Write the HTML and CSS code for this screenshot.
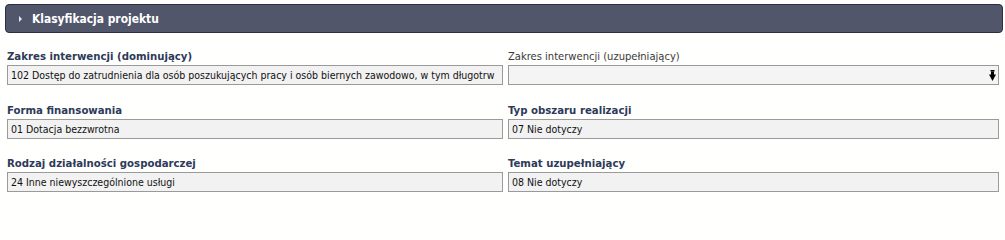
FILE: index.html
```html
<!DOCTYPE html>
<html lang="pl">
<head>
<meta charset="utf-8">
<link rel="stylesheet" href="styles.css">
</head>
<body>
<div class="panel">
  <div class="header">
    <span class="caret"></span>
    <span class="title">Klasyfikacja projektu</span>
  </div>
  <div class="fields">
    <div class="field">
      <div class="label">Zakres interwencji (dominujący)</div>
      <div class="input">102 Dostęp do zatrudnienia dla osób poszukujących pracy i osób biernych zawodowo, w tym długotrw</div>
    </div>
    <div class="field">
      <div class="label plain">Zakres interwencji (uzupełniający)</div>
      <div class="input select">
        <svg class="arrow" width="7" height="11" viewBox="0 0 7 11"><rect x="1.5" y="0" width="4" height="1.5" fill="#000"/><rect x="2" y="1.5" width="3" height="3.5" fill="#000"/><polygon points="0,4.5 7,4.5 3.5,11" fill="#000"/></svg>
      </div>
    </div>
    <div class="field">
      <div class="label">Forma finansowania</div>
      <div class="input">01 Dotacja bezzwrotna</div>
    </div>
    <div class="field">
      <div class="label">Typ obszaru realizacji</div>
      <div class="input">07 Nie dotyczy</div>
    </div>
    <div class="field">
      <div class="label">Rodzaj działalności gospodarczej</div>
      <div class="input">24 Inne niewyszczególnione usługi</div>
    </div>
    <div class="field">
      <div class="label">Temat uzupełniający</div>
      <div class="input">08 Nie dotyczy</div>
    </div>
  </div>
</div>
</body>
</html>
```
FILE: styles.css
```css
html, body {
  margin: 0;
  padding: 0;
  background: #fffffd;
}
body {
  font-family: "DejaVu Sans Condensed", "DejaVu Sans", sans-serif;
  font-size: 10.5px;
  color: #222;
}
.panel {
  padding: 4px 2px 0 5px;
}
.header {
  height: 27px;
  background: #52566b;
  border: 1px solid #2c2f44;
  border-radius: 4px;
  display: flex;
  align-items: center;
  color: #fff;
}
.caret {
  width: 0;
  height: 0;
  border-top: 3px solid transparent;
  border-bottom: 3px solid transparent;
  border-left: 3px solid #e8e9ee;
  margin-left: 13px;
  margin-right: 10px;
}
.title {
  font-weight: bold;
  font-size: 11.9px;
}
.fields {
  display: grid;
  grid-template-columns: 496px 491px;
  column-gap: 5px;
  row-gap: 18.5px;
  padding: 17px 0 0 2px;
}
.label {
  font-weight: bold;
  color: #2d3a5a;
  font-size: 11.3px;
  line-height: 14px;
  height: 14px;
  margin-bottom: 1px;
  white-space: nowrap;
}
.label.plain {
  font-weight: normal;
  color: #3a3a3a;
  font-size: 11.1px;
}
.input {
  box-sizing: border-box;
  height: 20px;
  border: 1px solid #9a9a9a;
  background: #f2f2f2;
  padding: 0 0 0 3px;
  line-height: 18px;
  white-space: nowrap;
  overflow: hidden;
  color: #111;
}
.input.select {
  display: flex;
  justify-content: flex-end;
  align-items: center;
  padding-right: 2px;
  background: #f4f4f4;
}
.arrow {
  display: block;
}
```
